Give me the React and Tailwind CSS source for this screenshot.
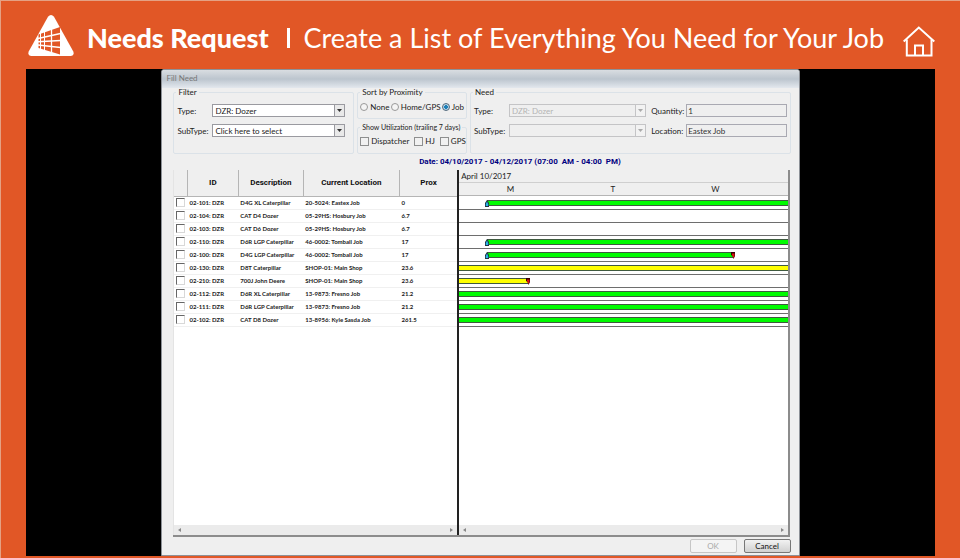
import React from "react";

const equipment = [
  { id: "02-101: DZR", description: "D4G XL Caterpillar", location: "20-5024: Eastex Job", prox: "0", bar: { start: 28, end: 330, color: "green", flag: "start" } },
  { id: "02-104: DZR", description: "CAT D4 Dozer", location: "05-29HS: Hosbury Job", prox: "6.7" },
  { id: "02-103: DZR", description: "CAT D6 Dozer", location: "05-29HS: Hosbury Job", prox: "6.7" },
  { id: "02-110: DZR", description: "D6R LGP Caterpillar", location: "46-0002: Tomball Job", prox: "17", bar: { start: 28, end: 330, color: "green", flag: "start" } },
  { id: "02-100: DZR", description: "D4G LGP Caterpillar", location: "46-0002: Tomball Job", prox: "17", bar: { start: 28, end: 275, color: "green", flag: "both" } },
  { id: "02-130: DZR", description: "D8T Caterpillar", location: "SHOP-01: Main Shop", prox: "23.6", bar: { start: 0, end: 330, color: "yellow" } },
  { id: "02-210: DZR", description: "700J John Deere", location: "SHOP-01: Main Shop", prox: "23.6", bar: { start: 0, end: 69, color: "yellow", flag: "end" } },
  { id: "02-112: DZR", description: "D6R XL Caterpillar", location: "13-9873: Fresno Job", prox: "21.2", bar: { start: 0, end: 330, color: "green" } },
  { id: "02-111: DZR", description: "D6R LGP Caterpillar", location: "13-9873: Fresno Job", prox: "21.2", bar: { start: 0, end: 330, color: "green" } },
  { id: "02-102: DZR", description: "CAT D8 Dozer", location: "13-8956: Kyle Sasda Job", prox: "261.5", bar: { start: 0, end: 330, color: "green" } },
];

// bar positions are in timeline units, the visible range is 330 wide
const RANGE = 330;

function Logo() {
  return (
    <svg viewBox="0 0 46 41" className="h-[41px] w-[46px] shrink-0" aria-hidden="true">
      <path d="M20 1.8Q23 -1.6 26 1.8L45.3 36.5Q46.6 40.6 42.5 41H3.5Q-0.6 40.6 0.7 36.5Z" fill="#fff" />
      <path d="M10.5 19.5L32 12V39.5L10.5 33Z" fill="#e15726" />
      <g stroke="#fff" fill="none">
        <path d="M10 23.5L32.5 18.5M10 26.8L32.5 25.5M10 30L32.5 32.5" strokeWidth="1.4" />
        <path d="M12.5 18V35M16.5 16V37" strokeWidth="1" />
        <path d="M23.5 14V38" strokeWidth="1.3" />
      </g>
    </svg>
  );
}

function HomeIcon() {
  return (
    <svg viewBox="0 0 32 31" className="h-[31px] w-8" fill="none" stroke="#fff" strokeWidth="2" aria-hidden="true">
      <path d="M0.7 15.5L15.8 1.5L31.3 15.5" />
      <path d="M3.8 13.5V29.5H28.5V13.5" />
      <path d="M12 29.5V19.5H20V29.5" />
    </svg>
  );
}

function Combo({ id, label, value, disabled }) {
  return (
    <div className="flex h-[13px] items-center">
      <label htmlFor={id} className="w-[35px] shrink-0">{label}</label>
      <div className="relative h-full min-w-0 flex-1">
        <select
          id={id}
          disabled={disabled}
          className={`block h-full w-full appearance-none border pl-[2px] ${
            disabled ? "border-[#c4c4c6] bg-[#efefef] text-[#b4b4b4]" : "border-[#9a9aa0] bg-white text-[#222]"
          }`}
        >
          <option>{value}</option>
        </select>
        <span
          className={`pointer-events-none absolute inset-y-0 right-0 flex w-[11px] items-center justify-center border ${
            disabled ? "border-[#c4c4c6] bg-[#f2f2f2] text-[#aaa]" : "border-[#9a9aa0] bg-[#e9e9e9] text-[#333]"
          }`}
        >
          <svg viewBox="0 0 5 3" className="h-[3px] w-[5px]" fill="currentColor">
            <path d="M0 0H5L2.5 3Z" />
          </svg>
        </span>
      </div>
    </div>
  );
}

function ReadOnlyField({ id, label, value }) {
  return (
    <div className="flex h-[13px] min-w-0 items-center">
      <label htmlFor={id} className="w-[35px] shrink-0">{label}</label>
      <input
        id={id}
        readOnly
        defaultValue={value}
        className="h-full min-w-0 flex-1 border border-[#a9a9b2] bg-[#efefef] px-px text-[#333]"
      />
    </div>
  );
}

function Group({ title, className, children }) {
  return (
    <fieldset className={`min-w-0 rounded-[2px] border border-[#dbe2e8] ${className}`}>
      <legend className="ml-[2px] h-[9px] whitespace-nowrap px-[2px] leading-[9px]">{title}</legend>
      {children}
    </fieldset>
  );
}

function Radio({ label, checked }) {
  return (
    <label className="flex items-center gap-[2px]">
      <input
        type="radio"
        name="proximity"
        defaultChecked={checked}
        className="size-2 appearance-none rounded-full border border-[#999] bg-[#f4f4f4] checked:border-[#51697c] checked:bg-[radial-gradient(circle,#1c7fb8_45%,#b9d6e8_50%)]"
      />
      {label}
    </label>
  );
}

function Check({ label }) {
  return (
    <label className="flex items-center gap-[2px]">
      <input type="checkbox" className="size-[9px] appearance-none border border-[#8e8f8f] bg-[#f1f1f1] checked:bg-[#1c7fb8]" />
      {label}
    </label>
  );
}

function ScrollBar() {
  return (
    <div className="flex h-[10px] items-center justify-between bg-[#ebebeb] px-1 text-[#888]">
      <svg viewBox="0 0 3 4" className="h-1 w-[3px]" fill="currentColor"><path d="M3 0V4L0 2Z" /></svg>
      <svg viewBox="0 0 3 4" className="h-1 w-[3px]" fill="currentColor"><path d="M0 0V4L3 2Z" /></svg>
    </div>
  );
}

function StartFlag() {
  return (
    <svg viewBox="0 0 4 7" className="absolute -left-[2px] -top-px h-[7px] w-1">
      <path d="M2 0L4 3V7H0V3Z" fill="#234" />
      <path d="M2 1.5L3.2 4V6H0.8V4Z" fill="#2bb5e8" />
    </svg>
  );
}

function EndFlag() {
  return (
    <svg viewBox="0 0 4 7" className="absolute -right-[2px] -top-px h-[7px] w-1">
      <path d="M0 0H4V4L2.5 7L1.5 4L0 3Z" fill="#300" />
      <path d="M1 1.5H3.5V4L2.5 6L1 3Z" fill="#e01010" />
    </svg>
  );
}

function TimelineRow({ bar }) {
  return (
    <div className="relative h-[13px] border-t border-[#6e6e6e] first:border-transparent">
      {bar && (
        <div
          className={`absolute top-[3px] h-[6px] border-y border-[#3f5a3f] ${
            bar.color === "green" ? "bg-[#00fb00]" : "bg-[#ffff00]"
          }`}
          style={{ left: `${(bar.start / RANGE) * 100}%`, width: `${((bar.end - bar.start) / RANGE) * 100}%` }}
        >
          {(bar.flag === "start" || bar.flag === "both") && <StartFlag />}
          {(bar.flag === "end" || bar.flag === "both") && <EndFlag />}
        </div>
      )}
    </div>
  );
}

function EquipmentTable() {
  return (
    <div className="flex w-[46.2%] flex-col border-l border-[#e4e4e4] bg-white">
      <table className="w-full table-fixed border-collapse">
        <colgroup>
          <col className="w-[13px]" />
          <col className="w-[18%]" />
          <col className="w-[23%]" />
          <col className="w-[34%]" />
          <col />
        </colgroup>
        <thead className="font-['Roboto',sans-serif]">
          <tr className="h-[26px] border-b border-[#b5b5b5] bg-[#efefef] text-[8px] font-bold text-[#111]">
            <th className="border-r border-[#b5b5b5]"></th>
            <th className="border-r border-[#b5b5b5]">ID</th>
            <th className="border-r border-[#b5b5b5]">Description</th>
            <th className="border-r border-[#b5b5b5]">Current Location</th>
            <th>Prox</th>
          </tr>
        </thead>
        <tbody className="text-[6px] leading-[8px] font-bold text-[#222]">
          {equipment.map((item) => (
            <tr key={item.id} className="h-[13px] border-b border-[#f0f0f0]">
              <td className="p-0">
                <input
                  type="checkbox"
                  aria-label={item.id}
                  className="ml-[2px] block size-[9px] appearance-none border border-[#d8d8d8] border-t-[#666] border-l-[#666] bg-white checked:bg-[#1c7fb8]"
                />
              </td>
              <td className="whitespace-nowrap p-0 pl-[2px]">{item.id}</td>
              <td className="whitespace-nowrap p-0 pl-[2px]">{item.description}</td>
              <td className="whitespace-nowrap p-0 pl-[2px]">{item.location}</td>
              <td className="whitespace-nowrap p-0 pl-[2px]">{item.prox}</td>
            </tr>
          ))}
        </tbody>
      </table>
      <div className="mt-auto">
        <ScrollBar />
      </div>
    </div>
  );
}

function Timeline() {
  return (
    <div className="flex min-w-0 flex-1 flex-col border-l-2 border-[#222] bg-white">
      <div className="h-[13px] border-b border-[#cfcfcf] bg-[#efefef] px-[2px] leading-[12px]">April 10/2017</div>
      <div className="grid h-[13px] grid-cols-[103fr_103fr_103fr_21fr] border-b border-[#b5b5b5] bg-[#efefef] text-center leading-[12px]">
        <span>M</span>
        <span>T</span>
        <span>W</span>
      </div>
      <div className="overflow-hidden border-b border-[#6e6e6e]">
        {equipment.map((item) => (
          <TimelineRow key={item.id} bar={item.bar} />
        ))}
      </div>
      <div className="mt-auto">
        <ScrollBar />
      </div>
    </div>
  );
}

export default function App() {
  return (
    <div className="flex min-h-screen flex-col border-t border-l border-[#e4a184] bg-[#e15726] pb-[2px] font-['Lato',sans-serif]">
      <header className="flex h-[68px] items-center pr-[25px] pl-[27px] text-white">
        <Logo />
        <h1 className="mt-[6px] ml-[13px] flex items-center whitespace-nowrap text-[27px]">
          <span className="font-black">Needs Request</span>
          <span className="mr-[14px] ml-[18px] h-5 w-[3px] bg-white"></span>
          <span>Create a List of Everything You Need for Your Job</span>
        </h1>
        <a href="#home" aria-label="Home" className="ml-auto mt-3">
          <HomeIcon />
        </a>
      </header>

      <main className="mr-[25px] ml-[25px] flex flex-1 justify-center bg-black">
        <section className="flex w-[70.2%] flex-col rounded-t-[3px] border border-[#8d9197] bg-[#efefef] text-[8px] leading-[10px] text-[#222]">
          <h2 className="h-[18px] rounded-t-[2px] bg-linear-to-b from-[#d9dde1] via-[#bcc5ce] to-[#e3e8ee] px-1 leading-[17px] text-[#777]">
            Fill Need
          </h2>

          <form className="flex min-h-0 flex-1 flex-col pr-2 pl-[11px]" onSubmit={(e) => e.preventDefault()}>
            <div className="flex gap-[3px]">
              <Group title="Filter" className="w-[29.3%]">
                <div className="mt-[7px] space-y-[7px] pr-[8px] pl-[3px]">
                  <Combo id="filter-type" label="Type:" value="DZR: Dozer" />
                  <Combo id="filter-subtype" label="SubType:" value="Click here to select" />
                </div>
              </Group>

              <div className="flex w-[17.8%] flex-col gap-1">
                <Group title="Sort by Proximity" className="h-[31px]">
                  <div className="mt-[5px] flex justify-between px-[2px]">
                    <Radio label="None" />
                    <Radio label="Home/GPS" />
                    <Radio label="Job" checked />
                  </div>
                </Group>
                <Group title="Show Utilization (trailing 7 days)" className="h-[31px] text-[7px]">
                  <div className="mt-1 flex gap-[5px] px-[2px] text-[8px]">
                    <Check label="Dispatcher" />
                    <Check label="HJ" />
                    <Check label="GPS" />
                  </div>
                </Group>
              </div>

              <Group title="Need" className="flex-1">
                <div className="mt-[7px] grid grid-cols-[minmax(0,173fr)_minmax(0,136fr)] gap-x-[5px] gap-y-[7px] px-[3px]">
                  <Combo id="need-type" label="Type:" value="DZR: Dozer" disabled />
                  <ReadOnlyField id="need-quantity" label="Quantity:" value="1" />
                  <Combo id="need-subtype" label="SubType:" value="" disabled />
                  <ReadOnlyField id="need-location" label="Location:" value="Eastex Job" />
                </div>
              </Group>
            </div>

            <p className="mt-[3px] whitespace-pre pl-[76px] text-center font-['Roboto',sans-serif] font-bold text-[#000080]">
              Date: 04/10/2017 - 04/12/2017 (07:00  AM - 04:00  PM)
            </p>

            <div className="mt-[3px] mr-px flex flex-1 border-r-2 border-b-2 border-[#8c8c8c]">
              <EquipmentTable />
              <Timeline />
            </div>

            <div className="mt-[2px] mb-[2px] flex justify-end gap-[7px]">
              <button type="submit" disabled className="h-[14px] w-[47px] rounded-[2px] border border-[#c6c6c6] bg-[#f4f4f4] text-[#aaa]">
                OK
              </button>
              <button type="button" className="h-[14px] w-[47px] rounded-[2px] border border-[#777] bg-linear-to-b from-[#f2f2f2] to-[#d0d0d0] text-[#111]">
                Cancel
              </button>
            </div>
          </form>
        </section>
      </main>
    </div>
  );
}
